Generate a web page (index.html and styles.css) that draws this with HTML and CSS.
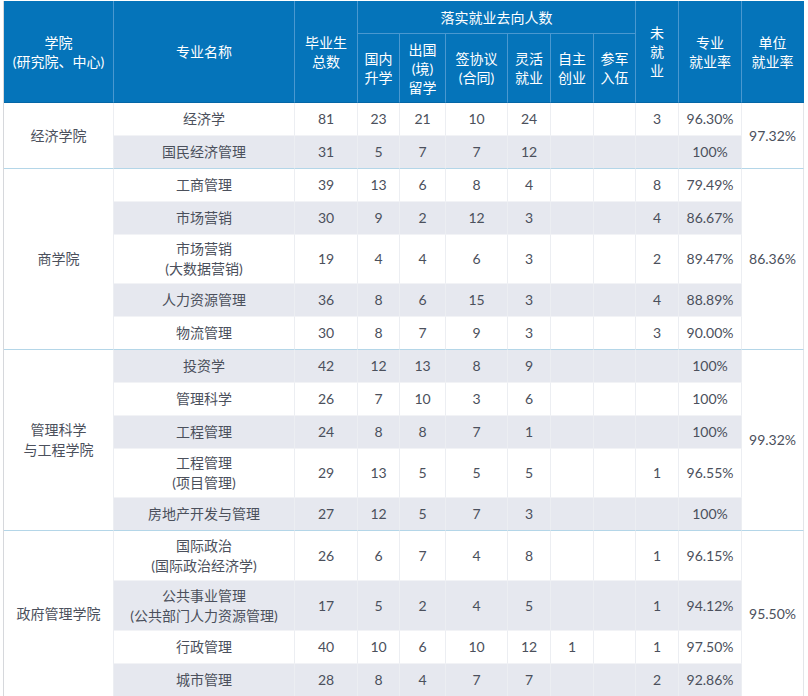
FILE: index.html
```html
<!DOCTYPE html>
<html lang="zh-CN">
<head>
<meta charset="utf-8">
<title>就业情况</title>
<link rel="stylesheet" href="styles.css">
</head>
<body>
<table class="t">
  <colgroup>
    <col class="c110"><col class="c181"><col class="c63"><col class="c42"><col class="c46"><col class="c62"><col class="c43"><col class="c43"><col class="c42"><col class="c43"><col class="c63"><col class="c62">
  </colgroup>
  <thead>
    <tr class="h1">
      <th rowspan="2">学院<br>(研究院、中心)</th>
      <th rowspan="2">专业名称</th>
      <th rowspan="2">毕业生<br>总数</th>
      <th colspan="6">落实就业去向人数</th>
      <th rowspan="2">未<br>就<br>业</th>
      <th rowspan="2">专业<br>就业率</th>
      <th rowspan="2" class="last">单位<br>就业率</th>
    </tr>
    <tr class="h2">
      <th>国内<br>升学</th>
      <th>出国<br>(境)<br>留学</th>
      <th>签协议<br>(合同)</th>
      <th>灵活<br>就业</th>
      <th>自主<br>创业</th>
      <th>参军<br>入伍</th>
    </tr>
  </thead>
  <tbody>
    <tr class="r1">
      <td rowspan="2" class="rs end">经济学院</td>
      <td>经济学</td><td>81</td><td>23</td><td>21</td><td>10</td><td>24</td><td></td><td></td><td>3</td><td>96.30%</td>
      <td rowspan="2" class="rs end last">97.32%</td>
    </tr>
    <tr class="r1 g end">
      <td>国民经济管理</td><td>31</td><td>5</td><td>7</td><td>7</td><td>12</td><td></td><td></td><td></td><td>100%</td>
    </tr>

    <tr class="r1">
      <td rowspan="5" class="rs end">商学院</td>
      <td>工商管理</td><td>39</td><td>13</td><td>6</td><td>8</td><td>4</td><td></td><td></td><td>8</td><td>79.49%</td>
      <td rowspan="5" class="rs end last">86.36%</td>
    </tr>
    <tr class="r1 g">
      <td>市场营销</td><td>30</td><td>9</td><td>2</td><td>12</td><td>3</td><td></td><td></td><td>4</td><td>86.67%</td>
    </tr>
    <tr class="r2">
      <td>市场营销<br>(大数据营销)</td><td>19</td><td>4</td><td>4</td><td>6</td><td>3</td><td></td><td></td><td>2</td><td>89.47%</td>
    </tr>
    <tr class="r1 g">
      <td>人力资源管理</td><td>36</td><td>8</td><td>6</td><td>15</td><td>3</td><td></td><td></td><td>4</td><td>88.89%</td>
    </tr>
    <tr class="r1 end">
      <td>物流管理</td><td>30</td><td>8</td><td>7</td><td>9</td><td>3</td><td></td><td></td><td>3</td><td>90.00%</td>
    </tr>

    <tr class="r1 g">
      <td rowspan="5" class="rs end">管理科学<br>与工程学院</td>
      <td>投资学</td><td>42</td><td>12</td><td>13</td><td>8</td><td>9</td><td></td><td></td><td></td><td>100%</td>
      <td rowspan="5" class="rs end last">99.32%</td>
    </tr>
    <tr class="r1">
      <td>管理科学</td><td>26</td><td>7</td><td>10</td><td>3</td><td>6</td><td></td><td></td><td></td><td>100%</td>
    </tr>
    <tr class="r1 g">
      <td>工程管理</td><td>24</td><td>8</td><td>8</td><td>7</td><td>1</td><td></td><td></td><td></td><td>100%</td>
    </tr>
    <tr class="r2">
      <td>工程管理<br>(项目管理)</td><td>29</td><td>13</td><td>5</td><td>5</td><td>5</td><td></td><td></td><td>1</td><td>96.55%</td>
    </tr>
    <tr class="r1 g end">
      <td>房地产开发与管理</td><td>27</td><td>12</td><td>5</td><td>7</td><td>3</td><td></td><td></td><td></td><td>100%</td>
    </tr>

    <tr class="r2w">
      <td rowspan="4" class="rs">政府管理学院</td>
      <td>国际政治<br>(国际政治经济学)</td><td>26</td><td>6</td><td>7</td><td>4</td><td>8</td><td></td><td></td><td>1</td><td>96.15%</td>
      <td rowspan="4" class="rs last">95.50%</td>
    </tr>
    <tr class="r2w g">
      <td>公共事业管理<br>(公共部门人力资源管理)</td><td>17</td><td>5</td><td>2</td><td>4</td><td>5</td><td></td><td></td><td>1</td><td>94.12%</td>
    </tr>
    <tr class="r1">
      <td>行政管理</td><td>40</td><td>10</td><td>6</td><td>10</td><td>12</td><td>1</td><td></td><td>1</td><td>97.50%</td>
    </tr>
    <tr class="r1 g">
      <td>城市管理</td><td>28</td><td>8</td><td>4</td><td>7</td><td>7</td><td></td><td></td><td>2</td><td>92.86%</td>
    </tr>
  </tbody>
</table>
</body>
</html>
```

FILE: styles.css
```css
* { box-sizing: border-box; }
html, body { margin: 0; padding: 0; background: #ffffff; }
body { padding: 1px 0 0 3px; }

.t {
  table-layout: fixed;
  width: 801px;
  border-collapse: separate;
  border-spacing: 0;
  border-left: 1px solid #d6d8dc;
  font-family: "Lato", "Noto Sans CJK SC", sans-serif;
  font-size: 14px;
  color: #4b505c;
}
.c110 { width: 110px; }
.c181 { width: 181px; }
.c63 { width: 63px; }
.c42 { width: 42px; }
.c46 { width: 46px; }
.c62 { width: 62px; }
.c43 { width: 43px; }

.t th {
  background: #0574ba;
  color: #ffffff;
  font-weight: normal;
  line-height: 19px;
  padding: 0;
  text-align: center;
  vertical-align: middle;
  border-right: 1px solid #4a98d0;
  border-bottom: 1px solid #4a98d0;
  white-space: nowrap;
}
.t thead tr.h2 th,
.t thead tr.h1 th[rowspan] { border-bottom: 1px solid #0466a6; }
.t th.last { border-right: 1px solid #0574ba; }
.h1 { height: 33px; }
.h2 { height: 69px; }

.t td {
  background: #ffffff;
  padding: 0 2px;
  text-align: center;
  vertical-align: middle;
  line-height: 20px;
  white-space: nowrap;
  border-right: 1px solid #eceef2;
  border-bottom: 1px solid #f2f3f6;
}
.t td.last { border-right: 1px solid #e3e5e9; }
.r1 { height: 33px; }
.r2 { height: 49px; }
.r2w { height: 50px; }

.g td { background: #e6e8ef; }
.g td.rs { background: #ffffff; }
.end td, .t td.end { border-bottom: 1px solid #b4d6e8; }
```
